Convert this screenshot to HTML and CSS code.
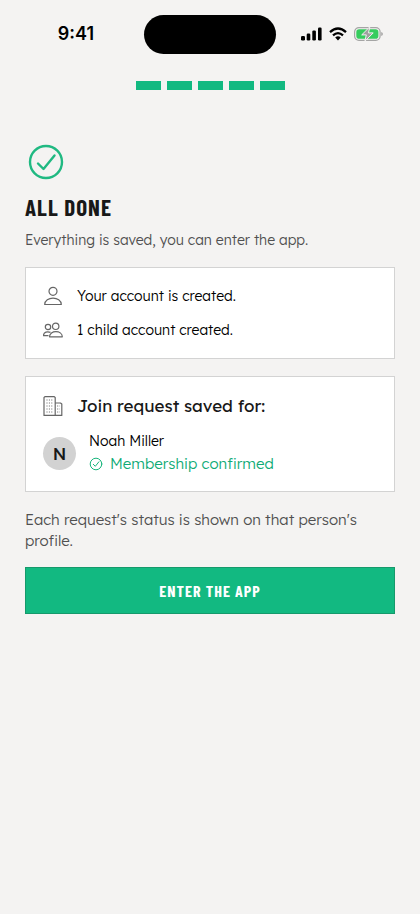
FILE: index.html
```html
<!DOCTYPE html>
<html lang="en">
<head>
<meta charset="utf-8">
<meta name="viewport" content="width=device-width, initial-scale=1">
<title>All done</title>
<link rel="stylesheet" href="styles.css">
</head>
<body>
<header class="status-bar">
  <div class="time">9:41</div>
  <div class="island"></div>
  <div class="indicators">
    <svg width="21" height="14" viewBox="0 0 21 14" aria-hidden="true"><rect x="0" y="9" width="4" height="4.500" rx="1.2"/><rect x="5.700" y="6.500" width="3.600" height="7" rx="1.2"/><rect x="11.300" y="3.500" width="3.600" height="10" rx="1.2"/><rect x="17" y="0.500" width="3.600" height="13" rx="1.2"/></svg>
    <svg width="18" height="14" viewBox="0 0 18 14" aria-hidden="true"><g fill="none" stroke="#000" stroke-width="2.300"><path d="M1 5.200Q9-2.200 17 5.200"/><path d="M4 8.400Q9 3.800 14 8.400"/></g><path d="M6.200 10.400Q9 8.200 11.800 10.400L9 13.400Z"/></svg>
    <svg width="29" height="14" viewBox="0 0 29 14" aria-hidden="true"><rect x=".6" y=".6" width="25.500" height="12.800" rx="4.300" fill="none" stroke="#a5a5a5" stroke-width="1.200"/><rect x="2.300" y="2.300" width="22.100" height="9.400" rx="2.800" fill="#35cc5d"/><path d="M27.300 5Q28.800 5.500 28.800 7T27.300 9Z" fill="#999"/><path d="M15.800-.2L7.700 7.900H12.300L10.900 14.200L19.200 5.900H14.500Z" fill="#a0a0a0" stroke="#f4f3f2" stroke-width="1"/></svg>
  </div>
</header>
<main class="page">
  <div class="steps" role="img" aria-label="Step 5 of 5"><span></span><span></span><span></span><span></span><span></span></div>
  <svg class="done-icon" viewBox="0 0 42 42" aria-hidden="true"><circle cx="21" cy="21" r="16"/><path d="M13 22.500L18.500 28L29.500 14.500"/></svg>
  <h1>ALL DONE</h1>
  <p class="lead">Everything is saved, you can enter the app.</p>
  <section class="card">
    <ul class="summary">
      <li>
        <svg class="icon" viewBox="0 0 20 20" aria-hidden="true"><circle cx="10" cy="5.300" r="4"/><path d="M1.700 18.500C1.700 9.900 18.300 9.900 18.300 18.500Z"/></svg>
        <span>Your account is created.</span>
      </li>
      <li>
        <svg class="icon" viewBox="0 0 20 20" aria-hidden="true"><circle cx="12.700" cy="6.300" r="3.200"/><circle cx="5" cy="7" r="2.700"/><path d="M6.500 16.800C6.500 10 19.300 10 19.300 16.800ZM7.500 12.400C4.500 11.100.5 12 .5 15.600H5.500"/></svg>
        <span>1 child account created.</span>
      </li>
    </ul>
  </section>
  <section class="card request">
    <h2>
      <svg class="icon" viewBox="0 0 20 20" aria-hidden="true"><path d="M1 19.400V1.500L2.200.6H11L12.200 1.500V19.400ZM12.200 7H17.500L18.800 8V19.400H12.200"/><path class="windows" d="M3.500 4H10M3.500 7H10M3.500 10H10M3.500 13H10M3.500 16H10M14.200 10H17M14.200 13H17M14.200 16H17"/></svg>
      <span>Join request saved for:</span>
    </h2>
    <div class="person">
      <div class="avatar" aria-hidden="true">N</div>
      <div>
        <div class="name">Noah Miller</div>
        <div class="membership">
          <svg viewBox="0 0 14 14" aria-hidden="true"><circle cx="7" cy="7" r="5.800"/><path d="M4.300 7.300L6.300 9.300L9.900 4.800"/></svg>
          <span>Membership confirmed</span>
        </div>
      </div>
    </div>
  </section>
  <p class="note">Each request's status is shown on that person's profile.</p>
  <button class="enter" type="button">ENTER THE APP</button>
</main>
</body>
</html>
```
FILE: styles.css
```css
* {
  box-sizing: border-box;
}

body {
  margin: 0;
  background: #f4f3f2;
  color: #181818;
  font-family: Lexend, Inter, "Liberation Sans", sans-serif;
  font-size: 14px;
  font-weight: 300;
  line-height: 20px;
}

h1, h2, p, ul {
  margin: 0;
  padding: 0;
}

svg {
  display: block;
  flex: none;
}

.status-bar {
  display: grid;
  grid-template-columns: 1fr 132px 1fr;
  align-items: center;
  height: 68px;
}

.time {
  padding-left: 8px;
  color: #000;
  font: 600 18px/24px Inter, sans-serif;
  text-align: center;
}

.island {
  height: 39px;
  border-radius: 20px;
  background: #000;
}

.indicators {
  display: flex;
  align-items: center;
  gap: 7px;
  padding-left: 25px;
}

.page {
  padding: 13px 25px 24px;
}

.steps {
  display: flex;
  justify-content: center;
  gap: 6px;
}

.steps span {
  width: 25px;
  height: 9px;
  background: #12b981;
}

.done-icon {
  width: 42px;
  height: 42px;
  margin-top: 51px;
  fill: none;
  stroke: #20b982;
  stroke-width: 2.4;
  stroke-linecap: round;
  stroke-linejoin: round;
}

h1 {
  margin-top: 10px;
  font: 700 23px/28px "Barlow Condensed", "Liberation Sans Narrow", "Liberation Sans", sans-serif;
  letter-spacing: 1px;
}

.lead {
  margin-top: 9px;
  color: #505050;
}

.card {
  margin-top: 17px;
  padding: 17px;
  border: 1px solid #d3d3d3;
  background: #fff;
}

.summary {
  display: grid;
  gap: 12px;
  color: #000;
  list-style: none;
}

.summary li {
  display: flex;
  align-items: center;
  gap: 14px;
  min-height: 22px;
}

.icon {
  width: 20px;
  height: 20px;
  fill: none;
  stroke: #666;
  stroke-width: 1.2;
  stroke-linejoin: round;
}

.icon .windows {
  stroke-width: 1;
  stroke-dasharray: 1 1.400;
}

h2 {
  display: flex;
  align-items: center;
  gap: 14px;
  font-size: 17px;
  font-weight: 400;
  line-height: 24px;
}

.person {
  display: flex;
  align-items: center;
  gap: 13px;
  margin-top: 12px;
}

.avatar {
  width: 33px;
  height: 33px;
  border-radius: 50%;
  background: #d2d2d2;
  font-size: 17px;
  font-weight: 500;
  line-height: 33px;
  text-align: center;
}

.name {
  color: #000;
  line-height: 22px;
}

.membership {
  display: flex;
  align-items: center;
  gap: 7px;
  color: #0fab76;
  font-size: 15px;
  line-height: 24px;
}

.request {
  padding-bottom: 15px;
}

.membership svg {
  width: 14px;
  height: 14px;
  fill: none;
  stroke: #18b57c;
  stroke-width: 1;
  stroke-linecap: round;
  stroke-linejoin: round;
}

.note {
  margin-top: 17px;
  color: #505050;
  font-size: 15px;
  line-height: 21px;
}

.enter {
  display: block;
  width: 100%;
  height: 47px;
  margin-top: 16px;
  padding: 0;
  border: 1px solid #16996b;
  border-radius: 0;
  background: #12b981;
  color: #fff;
  font: 700 16px/20px "Barlow Condensed", "Liberation Sans Narrow", "Liberation Sans", sans-serif;
  letter-spacing: 1px;
}
```
